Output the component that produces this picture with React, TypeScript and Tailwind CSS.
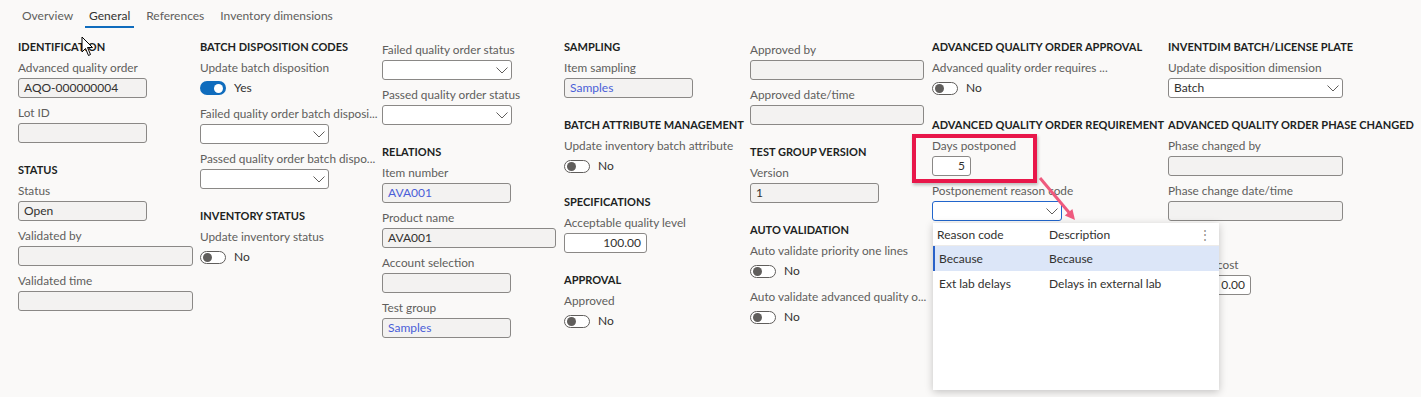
import type { ReactNode } from 'react'

type Item =
  | { k: 'h'; t: string; mt?: string }
  | { k: 'f'; l: string; v?: string; w: string; edit?: boolean; link?: boolean; num?: boolean }
  | { k: 's'; l: string; v?: string; w: string; focus?: boolean; popup?: boolean }
  | { k: 't'; l: string; on?: boolean }

const font = { fontFamily: 'Lato, "Liberation Sans", sans-serif' }

// spacing between blocks depends on what came before
const gap = (prev: string | null, k: string) => {
  if (k === 'h') {
    if (!prev) return ''
    return prev === 't' ? 'mt-[21px]' : 'mt-[19px]'
  }
  if (!prev) return 'mt-[3px]'
  if (prev === 'h') return 'mt-[5px]'
  if (prev === 't') return 'mt-[11px]'
  return 'mt-[7px]'
}

const Chevron = () => (
  <svg width="12" height="7" viewBox="0 0 12 7" className="shrink-0">
    <polyline points="0.5,0.5 6,6 11.5,0.5" fill="none" stroke="#605e5c" strokeWidth="1" />
  </svg>
)

const Toggle = ({ on }: { on?: boolean }) => (
  <div className="mt-[5px] flex items-center h-[14px]">
    {on ? (
      <div className="w-[26px] h-[14px] rounded-full bg-[#0f6cbd] flex items-center justify-end pr-[3px]">
        <div className="w-[9px] h-[9px] rounded-full bg-white" />
      </div>
    ) : (
      <div className="w-[26px] h-[13px] rounded-full border border-[#605e5c] bg-white flex items-center pl-[2px]">
        <div className="w-[9px] h-[9px] rounded-full bg-[#605e5c]" />
      </div>
    )}
    <span className="ml-[8px] text-[12px] text-[#323130]">{on ? 'Yes' : 'No'}</span>
  </div>
)

const Popup = () => (
  <div className="absolute left-[1px] top-[22px] z-10 w-[286px] h-[167px] bg-white shadow-[0_2px_8px_rgba(0,0,0,0.22)]">
    <div className="flex items-center pt-[2px] h-[23px] border-b border-[#edebe9] text-[12px] text-[#323130]">
      <span className="w-[116px] pl-[4px]">Reason code</span>
      <span className="flex-1">Description</span>
      <span className="pr-[8px] text-[#8a8886] leading-none">⋮</span>
    </div>
    <div className="flex items-center h-[25px] bg-[#dce6f8] border-l-2 border-[#2a62c9] text-[12px] text-[#323130]">
      <span className="w-[114px] pl-[4px]">Because</span>
      <span>Because</span>
    </div>
    <div className="flex items-center h-[25px] text-[12px] text-[#323130]">
      <span className="w-[116px] pl-[6px]">Ext lab delays</span>
      <span>Delays in external lab</span>
    </div>
  </div>
)

const Block = ({ it, prev }: { it: Item; prev: string | null }) => {
  if (it.k === 'h')
    return (
      <div className={`${it.mt ?? gap(prev, 'h')} h-4 leading-4 text-[11px] font-bold text-[#201f1e] whitespace-nowrap`}>
        {it.t}
      </div>
    )
  const mt = gap(prev, it.k)
  let body: ReactNode
  if (it.k === 't') body = <Toggle on={it.on} />
  else if (it.k === 's')
    body = (
      <div className="relative mt-[2px]">
        <div
          className={`${it.w} h-5 rounded-[3px] bg-white flex items-center justify-between pl-[5px] pr-[3px] ${
            it.focus ? 'border-[1.5px] border-[#2266cc]' : 'border border-[#8a8886]'
          }`}
        >
          <span className="text-[12px] text-[#323130]">{it.v}</span>
          <Chevron />
        </div>
        {it.popup && <Popup />}
      </div>
    )
  else
    body = (
      <div
        className={`${it.w} mt-[2px] h-5 rounded-[3px] border border-[#8a8886] flex items-center px-[5px] text-[12px] ${
          it.edit ? 'bg-white' : 'bg-[#f3f2f1]'
        } ${it.num ? 'justify-end' : ''} ${it.link ? 'text-[#4a5ed8]' : 'text-[#323130]'}`}
      >
        {it.v}
      </div>
    )
  return (
    <div className={mt}>
      <div className="h-4 leading-4 text-[11.8px] text-[#605e5c] whitespace-nowrap">{it.l}</div>
      {body}
    </div>
  )
}

const Column = ({ items, w }: { items: Item[]; w: string }) => (
  <div className={`${w} shrink-0 flex flex-col`}>
    {items.map((it, i) => (
      <Block key={i} it={it} prev={i ? items[i - 1].k : null} />
    ))}
  </div>
)

const w129 = 'w-[129px]'
const w175 = 'w-[175px]'

const columns: { w: string; items: Item[] }[] = [
  {
    w: 'w-[182px]',
    items: [
      { k: 'h', t: 'IDENTIFICATION' },
      { k: 'f', l: 'Advanced quality order', v: 'AQO-000000004', w: w129 },
      { k: 'f', l: 'Lot ID', w: w129 },
      { k: 'h', t: 'STATUS' },
      { k: 'f', l: 'Status', v: 'Open', w: w129 },
      { k: 'f', l: 'Validated by', w: w175 },
      { k: 'f', l: 'Validated time', w: w175 },
    ],
  },
  {
    w: 'w-[182px]',
    items: [
      { k: 'h', t: 'BATCH DISPOSITION CODES' },
      { k: 't', l: 'Update batch disposition', on: true },
      { k: 's', l: 'Failed quality order batch disposi...', w: w129 },
      { k: 's', l: 'Passed quality order batch dispo...', w: w129 },
      { k: 'h', t: 'INVENTORY STATUS' },
      { k: 't', l: 'Update inventory status' },
    ],
  },
  {
    w: 'w-[182px]',
    items: [
      { k: 's', l: 'Failed quality order status', w: 'w-[130px]' },
      { k: 's', l: 'Passed quality order status', w: 'w-[130px]' },
      { k: 'h', t: 'RELATIONS' },
      { k: 'f', l: 'Item number', v: 'AVA001', w: w129, link: true },
      { k: 'f', l: 'Product name', v: 'AVA001', w: 'w-[174px]' },
      { k: 'f', l: 'Account selection', w: w129 },
      { k: 'f', l: 'Test group', v: 'Samples', w: w129, link: true },
    ],
  },
  {
    w: 'w-[186px]',
    items: [
      { k: 'h', t: 'SAMPLING' },
      { k: 'f', l: 'Item sampling', v: 'Samples', w: w129, link: true },
      { k: 'h', t: 'BATCH ATTRIBUTE MANAGEMENT' },
      { k: 't', l: 'Update inventory batch attribute' },
      { k: 'h', t: 'SPECIFICATIONS' },
      { k: 'f', l: 'Acceptable quality level', v: '100.00', w: 'w-[83px]', edit: true, num: true },
      { k: 'h', t: 'APPROVAL' },
      { k: 't', l: 'Approved' },
    ],
  },
  {
    w: 'w-[182px]',
    items: [
      { k: 'f', l: 'Approved by', w: 'w-[174px]' },
      { k: 'f', l: 'Approved date/time', w: 'w-[174px]' },
      { k: 'h', t: 'TEST GROUP VERSION' },
      { k: 'f', l: 'Version', v: '1', w: w129 },
      { k: 'h', t: 'AUTO VALIDATION' },
      { k: 't', l: 'Auto validate priority one lines' },
      { k: 't', l: 'Auto validate advanced quality o...' },
    ],
  },
  {
    w: 'w-[236px]',
    items: [
      { k: 'h', t: 'ADVANCED QUALITY ORDER APPROVAL' },
      { k: 't', l: 'Advanced quality order requires ...' },
      { k: 'h', t: 'ADVANCED QUALITY ORDER REQUIREMENT', mt: 'mt-[22px]' },
      { k: 'f', l: 'Days postponed', v: '5', w: 'w-[39px]', edit: true, num: true },
      { k: 's', l: 'Postponement reason code', w: 'w-[130px]', focus: true, popup: true },
    ],
  },
  {
    w: 'w-[250px]',
    items: [
      { k: 'h', t: 'INVENTDIM BATCH/LICENSE PLATE' },
      { k: 's', l: 'Update disposition dimension', v: 'Batch', w: w175 },
      { k: 'h', t: 'ADVANCED QUALITY ORDER PHASE CHANGED' },
      { k: 'f', l: 'Phase changed by', w: w175 },
      { k: 'f', l: 'Phase change date/time', w: w175 },
      { k: 'h', t: 'COST', mt: 'mt-[15px]' },
      { k: 'f', l: 'Standard cost', v: '0.00', w: 'w-[83px]', edit: true, num: true },
    ],
  },
]

const tabs = ['Overview', 'General', 'References', 'Inventory dimensions']

export default function App() {
  return (
    <div className="relative w-full h-[397px] overflow-hidden bg-[#faf9f8]" style={font}>
      <div className="flex gap-2 pl-[18px] pt-[8px]">
        {tabs.map((t) => (
          <div
            key={t}
            className={`px-1 h-[20px] leading-4 text-[12px] border-b-2 ${
              t === 'General' ? 'border-[#0f6cbd] text-[#323130]' : 'border-transparent text-[#605e5c]'
            }`}
          >
            {t}
          </div>
        ))}
      </div>
      <div className="flex pl-[18px] mt-[11px]">
        {columns.map((c, i) => (
          <Column key={i} w={c.w} items={c.items} />
        ))}
      </div>

      {/* annotation: red highlight box */}
      <div className="absolute left-[912px] top-[134px] w-[125px] h-[49px] border-4 border-[#e8174a] shadow-[1px_2px_3px_rgba(0,0,0,0.25)] pointer-events-none" />
      {/* annotation: arrow */}
      <svg className="absolute left-[1036px] top-[174px] z-20" width="44" height="50" viewBox="0 0 44 50">
        <line x1="4" y1="4" x2="33" y2="38.5" stroke="#ef5a7e" strokeWidth="3" />
        <polygon points="39,46 28.8,41.5 36.4,35.1" fill="#ef5a7e" />
      </svg>
      {/* mouse pointer */}
      <svg className="absolute left-[81px] top-[36px] z-20" width="14" height="21" viewBox="0 0 14 21">
        <path d="M1 1 L1 16 L4.5 12.5 L7.5 19.5 L9.5 18.5 L6.5 11.5 L11.5 11.5 Z" fill="white" stroke="black" strokeWidth="1" strokeLinejoin="round" />
      </svg>
    </div>
  )
}
